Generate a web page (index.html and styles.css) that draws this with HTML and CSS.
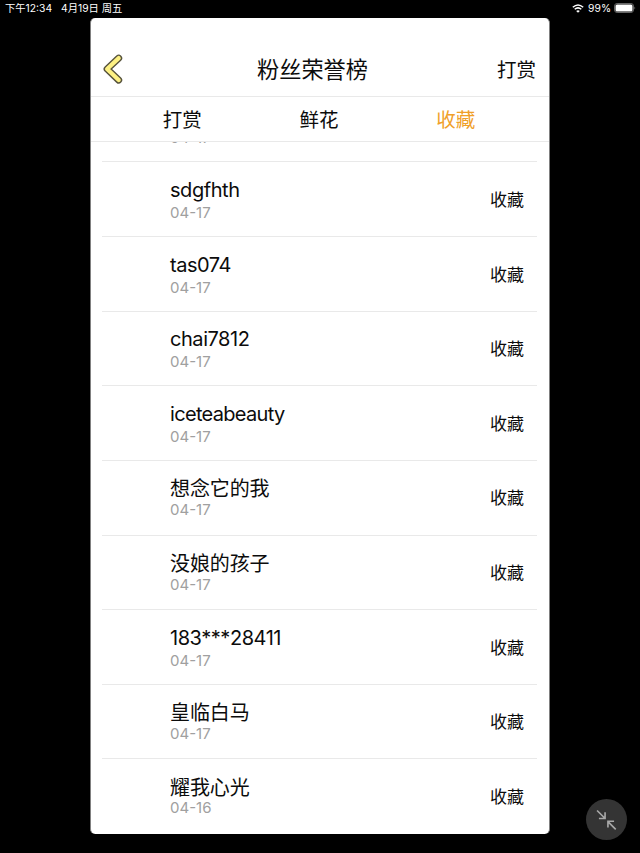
FILE: index.html
```html
<!DOCTYPE html>
<html lang="zh-CN">
<head>
<meta charset="utf-8">
<title>粉丝荣誉榜</title>
<link rel="stylesheet" href="styles.css">
</head>
<body>
<header class="status">
  <span>下午12:34</span><span class="date">4月19日 周五</span>
  <div class="status-right">
    <svg class="wifi" viewBox="0 0 12 9"><path d="M.8 3.3Q6-1.3 11.2 3.3M2.7 5.3Q6 2.5 9.3 5.3" fill="none" stroke="#fff" stroke-width="1.5"/><path d="M4.2 6.9Q6 5.4 7.8 6.9L6 8.8Z" fill="#fff"/></svg>
    <span class="percent">99%</span>
    <svg class="battery" viewBox="0 0 22 10"><rect x=".5" y=".5" width="19" height="9" rx="2.6" fill="none" stroke="#666"/><rect x="1.5" y="1.5" width="17" height="7" rx="1.5" fill="#fff"/><path d="M20.5 3.4q1.5 1.6 0 3.2z" fill="#888"/></svg>
  </div>
</header>
<main class="app">
  <div class="nav">
    <svg class="back" viewBox="0 0 20 30"><path d="M15.7 4.1L4.1 15l11.6 11.1" fill="none" stroke="#57533c" stroke-width="7" stroke-linecap="round" stroke-linejoin="round"/><path d="M15.7 4.1L4.1 15l11.6 11.1" fill="none" stroke="#fdf184" stroke-width="4.2" stroke-linecap="round" stroke-linejoin="round"/></svg>
    <h1>粉丝荣誉榜</h1>
    <span class="reward">打赏</span>
  </div>
  <nav class="tabs"><span>打赏</span><span>鲜花</span><span class="active">收藏</span></nav>
  <div class="list">
    <div class="row clipped"><div class="info"><div class="date-label">04-17</div></div></div>
    <div class="row"><div class="info"><div class="name">sdgfhth</div><div class="date-label">04-17</div></div><span class="action">收藏</span></div>
    <div class="row"><div class="info"><div class="name">tas074</div><div class="date-label">04-17</div></div><span class="action">收藏</span></div>
    <div class="row"><div class="info"><div class="name">chai7812</div><div class="date-label">04-17</div></div><span class="action">收藏</span></div>
    <div class="row"><div class="info"><div class="name tight">iceteabeauty</div><div class="date-label">04-17</div></div><span class="action">收藏</span></div>
    <div class="row cjk"><div class="info"><div class="name">想念它的我</div><div class="date-label">04-17</div></div><span class="action">收藏</span></div>
    <div class="row cjk"><div class="info"><div class="name">没娘的孩子</div><div class="date-label">04-17</div></div><span class="action">收藏</span></div>
    <div class="row"><div class="info"><div class="name">183***28411</div><div class="date-label">04-17</div></div><span class="action">收藏</span></div>
    <div class="row cjk"><div class="info"><div class="name">皇临白马</div><div class="date-label">04-17</div></div><span class="action">收藏</span></div>
    <div class="row cjk"><div class="info"><div class="name">耀我心光</div><div class="date-label">04-16</div></div><span class="action">收藏</span></div>
  </div>
</main>
<div class="shrink"><svg viewBox="0 0 40 40"><path d="M10.8 11.2l7.6 7.6M12.6 19h6V13M29 29.6l-7.6-7.6M27.4 21.7h-6V27.7" fill="none" stroke="#a8a8a8" stroke-width="1.6"/></svg></div>
</body>
</html>
```
FILE: styles.css
```css
* { box-sizing: border-box; }
body {
  margin: 0;
  width: 640px;
  height: 853px;
  overflow: hidden;
  background: #000;
  color: #0c0c0c;
  font-family: Inter, "Noto Sans CJK SC", sans-serif;
}
.status {
  display: flex;
  align-items: center;
  height: 18px;
  padding: 0 4px 2px 5px;
  color: #fff;
  font-size: 10.3px;
  line-height: 16px;
  white-space: nowrap;
}
.date { margin-left: 9px; }
.status-right { display: flex; align-items: center; margin-left: auto; }
.wifi { width: 12px; height: 9px; }
.percent { margin: 0 3px 0 4px; }
.battery { width: 22px; height: 10px; }
.app {
  width: 460px;
  height: 816px;
  margin-left: 90px;
  background: #fff;
  border: solid #808080;
  border-width: 0 1px;
  border-radius: 5px;
  overflow: hidden;
}
.nav {
  display: grid;
  grid-template-columns: 86px 1fr 100px;
  align-items: center;
  height: 79px;
  padding: 24px 13px 0 12px;
  border-bottom: 1px solid #e9e9e9;
}
.back { width: 20px; height: 30px; }
h1 { margin: 1px 0 0; font-size: 22.2px; font-weight: 400; line-height: 30px; text-align: center; }
.reward { margin-top: -1px; font-size: 19.5px; text-align: right; }
.tabs {
  display: grid;
  grid-template-columns: repeat(3, 136.8px);
  justify-content: center;
  height: 45px;
  padding-right: 2px;
  border-bottom: 1px solid #e9e9e9;
  font-size: 19.5px;
  line-height: 46px;
  text-align: center;
}
.active { color: #f0a029; }
.list { padding: 0 12px 0 11px; }
.row {
  display: flex;
  justify-content: space-between;
  height: 74.65px;
  padding: 14.6px 13px 0 68px;
  border-bottom: 1px solid #e9e9e9;
}
.row:last-child { border-bottom: 0; }
.clipped { height: 20.3px; padding-top: 0; overflow: hidden; }
.clipped .date-label { margin-top: -14px; }
.name { font-size: 20px; line-height: 26px; letter-spacing: -.45px; }
.tight { letter-spacing: -.68px; }
.date-label { color: #a0a0a0; font-size: 15px; line-height: 20px; }
.cjk .name { padding-top: 1px; letter-spacing: -.1px; }
.cjk .date-label { margin-top: -2.6px; }
.action { margin-top: 10px; font-size: 17px; line-height: 26px; }
.shrink {
  position: absolute;
  left: 586px;
  top: 799px;
  width: 41px;
  height: 41px;
  border-radius: 50%;
  background: #343434;
}
.shrink svg { display: block; width: 41px; height: 41px; }
```
